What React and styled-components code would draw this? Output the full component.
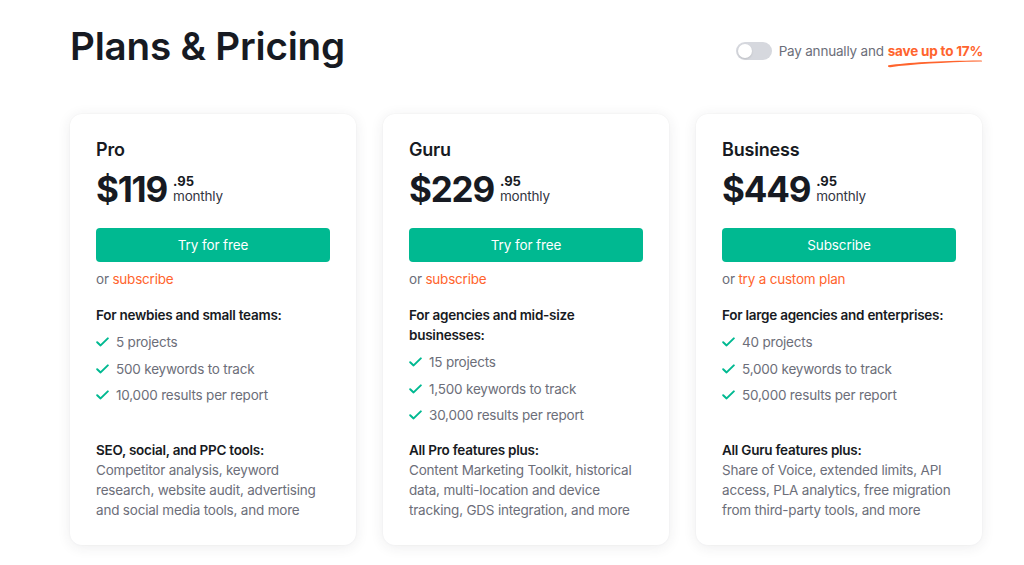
import React from "react";
import styled, { createGlobalStyle } from "styled-components";

const Global = createGlobalStyle`
  html, body { margin: 0; padding: 0; background: #ffffff; }
  body { font-family: Inter, "Noto Sans", Arial, sans-serif; color: #171a22; -webkit-font-smoothing: antialiased; }
  * { box-sizing: border-box; }
`;

const Page = styled.div`
  width: 1024px;
  height: 565px;
  padding: 23px 41px 0 70px;
  overflow: hidden;
`;

const Header = styled.header`
  display: flex;
  justify-content: space-between;
  align-items: flex-start;
  width: 913px;
`;

const Title = styled.h1`
  margin: 0;
  font-family: Inter, sans-serif;
  font-size: 38.6px;
  line-height: 46px;
  font-weight: 600;
  letter-spacing: -0.2px;
  color: #171a22;
`;

const Billing = styled.div`
  display: flex;
  align-items: center;
  gap: 7px;
  margin-top: 19px;
  font-size: 13.5px;
  line-height: 18px;
  letter-spacing: -0.2px;
  color: #6c6e79;
`;

const Toggle = styled.span`
  position: relative;
  width: 36px;
  height: 18px;
  border-radius: 9px;
  background: #d6d8de;
  flex-shrink: 0;
  &::after {
    content: "";
    position: absolute;
    left: 2px;
    top: 2px;
    width: 14px;
    height: 14px;
    border-radius: 50%;
    background: #fff;
    box-shadow: 0 1px 2px rgba(0, 0, 0, 0.12);
  }
`;

const Save = styled.span`
  position: relative;
  color: #ff642d;
  font-weight: 700;
  margin-left: 4px;
`;

const Squiggle = styled.svg`
  position: absolute;
  left: -1px;
  top: 15px;
  width: 96px;
  height: 10px;
`;

const Cards = styled.div`
  display: grid;
  grid-template-columns: repeat(3, 286px);
  gap: 27px;
  margin-top: 45px;
`;

const Card = styled.section`
  display: flex;
  flex-direction: column;
  min-height: 431px;
  padding: 25px 26px 25px;
  background: #fff;
  border-radius: 12px;
  box-shadow: 0 2px 14px rgba(40, 44, 60, 0.09), 0 0 2px rgba(40, 44, 60, 0.05);
`;

const PlanName = styled.h2`
  margin: 0;
  font-size: 18px;
  line-height: 22px;
  font-weight: 600;
  letter-spacing: -0.2px;
  color: #171a22;
`;

const PriceRow = styled.div`
  display: flex;
  align-items: flex-start;
  margin-top: 9px;
`;

const Amount = styled.span`
  font-size: 35px;
  line-height: 38px;
  font-weight: 700;
  letter-spacing: -1.2px;
  color: #171a22;
`;

const PriceMeta = styled.span`
  display: flex;
  flex-direction: column;
  margin-left: 6px;
  margin-top: 4px;
`;

const Cents = styled.span`
  font-size: 13px;
  line-height: 14px;
  font-weight: 700;
  color: #171a22;
`;

const Period = styled.span`
  font-size: 13.5px;
  line-height: 17px;
  letter-spacing: -0.2px;
  color: #333642;
`;

const Button = styled.button`
  margin-top: 20px;
  height: 34px;
  width: 100%;
  border: 0;
  border-radius: 4px;
  background: #00b991;
  color: #fff;
  font-family: inherit;
  font-size: 13.5px;
  letter-spacing: -0.1px;
  cursor: pointer;
`;

const Alt = styled.p`
  margin: 7px 0 0;
  font-size: 13.5px;
  line-height: 20px;
  letter-spacing: -0.2px;
  color: #6c6e79;
  a {
    color: #ff642d;
    text-decoration: none;
  }
`;

const Heading = styled.p`
  margin: ${(p) => p.$top || 0}px 0 0;
  font-size: 13.5px;
  line-height: 20px;
  font-weight: 600;
  letter-spacing: -0.25px;
  color: #171a22;
`;

const List = styled.ul`
  list-style: none;
  margin: 4px 0 0;
  padding: 0;
`;

const Item = styled.li`
  display: flex;
  align-items: center;
  gap: 7px;
  height: 26.5px;
  font-size: 13.5px;
  letter-spacing: -0.2px;
  color: #6c6e79;
`;

const Check = styled.svg`
  width: 13px;
  height: 10px;
  flex-shrink: 0;
`;

const Desc = styled.div`
  margin-top: auto;
`;

const DescText = styled.p`
  margin: 0;
  font-size: 13.5px;
  line-height: 20px;
  letter-spacing: -0.2px;
  color: #6c6e79;
`;

const plans = [
  {
    name: "Pro",
    price: "$119",
    cta: "Try for free",
    alt: "subscribe",
    audience: "For newbies and small teams:",
    items: ["5 projects", "500 keywords to track", "10,000 results per report"],
    descTitle: "SEO, social, and PPC tools:",
    desc: "Competitor analysis, keyword research, website audit, advertising and social media tools, and more",
  },
  {
    name: "Guru",
    price: "$229",
    cta: "Try for free",
    alt: "subscribe",
    audience: "For agencies and mid-size businesses:",
    items: ["15 projects", "1,500 keywords to track", "30,000 results per report"],
    descTitle: "All Pro features plus:",
    desc: "Content Marketing Toolkit, historical data, multi-location and device tracking, GDS integration, and more",
  },
  {
    name: "Business",
    price: "$449",
    cta: "Subscribe",
    alt: "try a custom plan",
    audience: "For large agencies and enterprises:",
    items: ["40 projects", "5,000 keywords to track", "50,000 results per report"],
    descTitle: "All Guru features plus:",
    desc: "Share of Voice, extended limits, API access, PLA analytics, free migration from third-party tools, and more",
  },
];

const CheckIcon = () => (
  <Check viewBox="0 0 13 10" fill="none">
    <path d="M1.2 5.2 L4.6 8.4 L11.8 1.4" stroke="#00b991" strokeWidth="2" strokeLinecap="round" strokeLinejoin="round" />
  </Check>
);

export default function App() {
  return (
    <>
      <Global />
      <Page>
        <Header>
          <Title>Plans &amp; Pricing</Title>
          <Billing>
            <Toggle />
            <span>
              Pay annually and
              <Save>
                save up to 17%
                <Squiggle viewBox="0 0 96 10" fill="none">
                  <path
                    d="M1.5 7.2 C 20 4.6, 50 2.6, 94 2.4 C 95.5 2.4, 95.6 3.4, 94 3.6 C 55 4.4, 25 6.4, 3.5 9.2 C 1.2 9.6, 0.2 7.8, 1.5 7.2 Z"
                    fill="#ff642d"
                  />
                </Squiggle>
              </Save>
            </span>
          </Billing>
        </Header>
        <Cards>
          {plans.map((p) => (
            <Card key={p.name}>
              <PlanName>{p.name}</PlanName>
              <PriceRow>
                <Amount>{p.price}</Amount>
                <PriceMeta>
                  <Cents>.95</Cents>
                  <Period>monthly</Period>
                </PriceMeta>
              </PriceRow>
              <Button>{p.cta}</Button>
              <Alt>
                or <a href="#">{p.alt}</a>
              </Alt>
              <Heading $top={16}>{p.audience}</Heading>
              <List>
                {p.items.map((it) => (
                  <Item key={it}>
                    <CheckIcon />
                    {it}
                  </Item>
                ))}
              </List>
              <Desc>
                <Heading>{p.descTitle}</Heading>
                <DescText>{p.desc}</DescText>
              </Desc>
            </Card>
          ))}
        </Cards>
      </Page>
    </>
  );
}
